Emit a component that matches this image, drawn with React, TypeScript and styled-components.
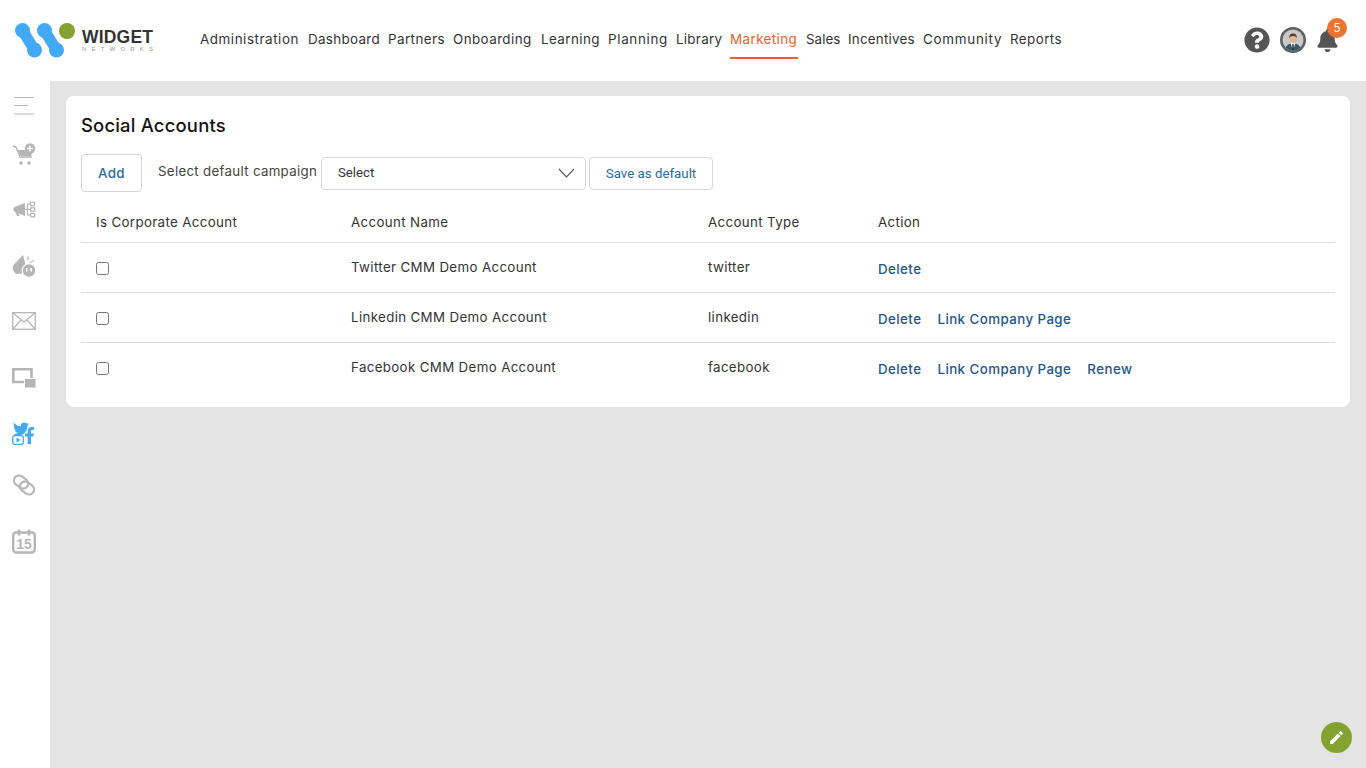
import React from "react";
import styled, { createGlobalStyle } from "styled-components";
import { FaBell, FaFacebookF, FaQuestionCircle, FaTwitter } from "react-icons/fa";
import { MdEdit } from "react-icons/md";

const GlobalStyle = createGlobalStyle`
  html, body { margin: 0; padding: 0; height: 100%; }
  body { font-family: Inter, "Open Sans", "Liberation Sans", sans-serif; color: #333; background: #fff; }
  * { box-sizing: border-box; }
`;

const Page = styled.div`
  height: 768px;
  display: flex;
  flex-direction: column;
  overflow: hidden;
  position: relative;
`;

const Header = styled.header`
  height: 81px;
  flex-shrink: 0;
  background: #fff;
  display: flex;
  align-items: flex-start;
  padding-left: 15px;
`;

const Logo = styled.div`
  width: 185px;
  height: 81px;
  display: flex;
  align-items: flex-start;
  padding-top: 21px;
`;

const LogoText = styled.div`
  margin: 7px 0 0 3px;
  display: flex;
  flex-direction: column;
`;

const LogoName = styled.span`
  font-family: "Liberation Sans", sans-serif;
  font-size: 17.5px;
  line-height: 18px;
  font-weight: 700;
  color: #333;
  letter-spacing: 0.2px;
`;

const LogoSub = styled.span`
  font-family: "Liberation Sans", sans-serif;
  font-size: 6px;
  line-height: 7px;
  color: #999;
  letter-spacing: 5.2px;
`;

const Nav = styled.nav`
  display: flex;
  gap: 8px;
  height: 59px;
`;

const NavItem = styled.a<{ $active?: boolean; $w: number; $ls: number }>`
  width: ${p => p.$w}px;
  white-space: nowrap;
  height: 100%;
  padding-top: 31px;
  font-size: 13.4px;
  line-height: 17px;
  letter-spacing: ${p => 0.42 + p.$ls}px;
  color: ${p => (p.$active ? "#e0622f" : "#333")};
  border-bottom: 2px solid ${p => (p.$active ? "#e0622f" : "transparent")};
`;

const HeaderTools = styled.div`
  margin-left: auto;
  display: flex;
  align-items: center;
  gap: 10px;
  height: 80px;
  padding-right: 27px;
`;

const ToolIcon = styled.span`
  position: relative;
  display: flex;
  color: #555;
`;

const Badge = styled.span`
  position: absolute;
  top: -11px;
  right: -8px;
  width: 20px;
  height: 20px;
  border-radius: 50%;
  background: #ea7434;
  color: #fff;
  font-size: 11.5px;
  line-height: 20px;
  text-align: center;
`;

const Body = styled.div`
  flex: 1;
  display: flex;
  min-height: 0;
`;

const Sidebar = styled.aside`
  width: 50px;
  flex-shrink: 0;
  background: #fff;
  display: flex;
  flex-direction: column;
  align-items: center;
`;

const SideSlot = styled.div<{ $h: number }>`
  height: ${p => p.$h}px;
  width: 100%;
  display: flex;
  align-items: center;
  justify-content: center;
  flex-shrink: 0;
  padding-right: 2px;
`;

const Main = styled.main`
  flex: 1;
  background: #e4e4e4;
  padding: 15px 16px;
`;

const Card = styled.section`
  background: #fff;
  border-radius: 8px;
  height: 311px;
  padding: 15px;
`;

const Title = styled.h1`
  margin: 0;
  font-size: 18.4px;
  line-height: 28px;
  font-weight: 500;
  color: #111;
  letter-spacing: 0.22px;
`;

const Toolbar = styled.div`
  margin-top: 15px;
  height: 38px;
  display: flex;
  align-items: flex-start;
`;

const AddButton = styled.button`
  width: 61px;
  height: 38px;
  background: #fff;
  border: 1px solid #d5d5d5;
  border-radius: 4px;
  font: inherit;
  font-size: 13.4px;
  font-weight: 450;
  letter-spacing: 0.3px;
  color: #2f6a9f;
  padding: 0;
`;

const FieldLabel = styled.label`
  margin-left: 16px;
  width: 163px;
  white-space: nowrap;
  font-size: 13.3px;
  line-height: 34px;
  letter-spacing: 0.3px;
  color: #444;
`;

const SelectBox = styled.div`
  margin-top: 3px;
  width: 265px;
  height: 33px;
  border: 1px solid #d8d8d8;
  border-radius: 4px;
  display: flex;
  align-items: center;
  justify-content: space-between;
  padding: 0 10px 2px 16px;
  font-family: Roboto, "Liberation Sans", sans-serif;
  font-size: 13.2px;
  color: #333;
`;

const SaveButton = styled.button`
  margin: 3px 0 0 3px;
  width: 124px;
  height: 33px;
  background: #fff;
  border: 1px solid #d8d8d8;
  border-radius: 4px;
  font-family: Roboto, "Liberation Sans", sans-serif;
  font-size: 13.3px;
  color: #2f6a9f;
  padding: 0;
`;

const TableRow = styled.div`
  display: grid;
  grid-template-columns: 255px 357px 170px 1fr;
  height: 50px;
  align-items: center;
  border-bottom: 1px solid #ddd;
  &:last-child {
    border-bottom-color: transparent;
  }
`;

const Cell = styled.div`
  padding: 0 15px 1px;
  font-size: 13.3px;
  letter-spacing: 0.36px;
  color: #333;
  white-space: nowrap;
`;

const HeadRow = styled.div`
  margin-top: 7px;
  display: grid;
  grid-template-columns: 255px 357px 170px 1fr;
  height: 44px;
  padding-top: 4px;
  align-items: center;
  border-bottom: 1px solid #ddd;
`;

const Actions = styled.div`
  padding: 3px 15px 0;
  display: flex;
  gap: 16px;
`;

const ActionLink = styled.a`
  font-size: 13.3px;
  font-weight: 450;
  letter-spacing: 0.44px;
  color: #22558c;
  white-space: nowrap;
`;

const Check = styled.input.attrs({ type: "checkbox" })`
  display: block;
  margin: 2px 0 0;
  width: 13px;
  height: 13px;
`;

const Fab = styled.button`
  position: absolute;
  right: 14px;
  bottom: 15px;
  width: 31px;
  height: 31px;
  border: 0;
  border-radius: 50%;
  background: #84a22f;
  color: #fff;
  display: flex;
  align-items: center;
  justify-content: center;
  padding: 0;
`;

const SocialWrap = styled.span`
  position: relative;
  display: block;
  width: 24px;
  height: 24px;
  color: #42a9f5;
`;

const SocialTwitter = styled.span`
  position: absolute;
  left: 1px;
  top: 0;
  display: flex;
`;

const SocialFacebook = styled.span`
  position: absolute;
  right: -2px;
  top: 6px;
  display: flex;
`;

const SocialPlay = styled.svg`
  position: absolute;
  left: 0;
  bottom: 0;
`;

const navItems: [string, number, number][] = [
  ["Administration", 100, 0.14], ["Dashboard", 72, -0.1], ["Partners", 57, 0], ["Onboarding", 80, 0], ["Learning", 59, 0],
  ["Planning", 60, 0.25], ["Library", 46, -0.14], ["Marketing", 68, 0], ["Sales", 34, -0.4], ["Incentives", 67, -0.2],
  ["Community", 79, 0.33], ["Reports", 52, 0],
];

const rows = [
  { name: "Twitter CMM Demo Account", type: "twitter", actions: ["Delete"] },
  { name: "Linkedin CMM Demo Account", type: "linkedin", actions: ["Delete", "Link Company Page"] },
  { name: "Facebook CMM Demo Account", type: "facebook", actions: ["Delete", "Link Company Page", "Renew"] },
];

const GREY = "#b5b5b5";
const BLUE = "#42a9f5";

const LogoMark = () => (
  <svg width="64" height="38" viewBox="0 0 64 38">
    <g fill={BLUE} stroke="none">
      <circle cx="7.5" cy="9.5" r="7.5" />
      <circle cx="19.5" cy="29" r="7.5" />
      <circle cx="29.5" cy="9.5" r="7.5" />
      <circle cx="41.5" cy="29" r="7.5" />
    </g>
    <g stroke={BLUE} strokeWidth="11">
      <path d="M7.5 9.5 L19.5 29" />
      <path d="M29.5 9.5 L41.5 29" />
    </g>
    <circle cx="52" cy="10" r="8" fill="#84a22f" />
  </svg>
);

const MenuIcon = () => (
  <svg width="22" height="20" viewBox="0 0 22 20" stroke={GREY} strokeWidth="1">
    <path d="M1 1.5h20M1 9.5h14M1 18h20" />
  </svg>
);

const CartIcon = () => (
  <svg width="24" height="24" viewBox="0 0 24 24">
    <path d="M1 3 L4 4 L8 14 H20" fill="none" stroke={GREY} strokeWidth="1.4" />
    <path d="M5.5 7 H15 L17 10 L20 9.5 L19 13 H8.5 Z" fill={GREY} />
    <circle cx="9" cy="20" r="1.8" fill={GREY} />
    <circle cx="17" cy="20" r="1.8" fill={GREY} />
    <circle cx="18" cy="5.5" r="5.2" fill={GREY} />
    <path d="M18 2.5v6M15 5.5h6" stroke="#fff" strokeWidth="1.5" />
  </svg>
);

const MegaphoneIcon = () => (
  <svg width="24" height="18" viewBox="0 0 24 18">
    <path d="M2.5 6 L13 2 V15 L3 11 Q0 8.5 2.5 6 Z" fill={GREY} />
    <path d="M3.5 11 L5 15 H7.5 L6.5 12" fill={GREY} />
    <g fill="none" stroke={GREY} strokeWidth="1.2">
      <path d="M13 8.5 H18 M15.5 8.5 V3 H18 M15.5 8.5 V14 H18" />
      <rect x="18.6" y="1.2" width="4" height="3.4" />
      <rect x="18.6" y="6.8" width="4" height="3.4" />
      <rect x="18.6" y="12.4" width="4" height="3.4" />
    </g>
  </svg>
);

const CampaignIcon = () => (
  <svg width="24" height="25" viewBox="0 0 24 25">
    <path d="M2 10.5 L11 1 L15.5 19 L4 20 Q-1.5 15 2 10.5 Z" fill={GREY} />
    <circle cx="17" cy="16.5" r="6.8" fill={GREY} stroke="#fff" strokeWidth="1.2" />
    <path d="M14.8 14v3.6M19.2 14v3.6" stroke="#fff" strokeWidth="1.6" />
    <path d="M15.5 6 L16.5 2.5M18.5 8.5 L22 6.5" stroke={GREY} strokeWidth="1.3" />
  </svg>
);

const MailIcon = () => (
  <svg width="24" height="18" viewBox="0 0 24 18" fill="none" stroke={GREY} strokeWidth="1.3">
    <rect x="0.7" y="0.7" width="22.6" height="16.6" />
    <path d="M1 1 L12 10 L23 1M1 17 L9 8M23 17 L15 8" />
  </svg>
);

const ScreenIcon = () => (
  <svg width="24" height="20" viewBox="0 0 24 20">
    <path d="M12 14H1.3V1.3H19.5V10" fill="none" stroke={GREY} strokeWidth="2.6" />
    <rect x="13" y="11" width="10.5" height="8.5" fill={GREY} />
  </svg>
);

const SocialIcon = () => (
  <SocialWrap>
    <SocialTwitter><FaTwitter size={16} /></SocialTwitter>
    <SocialFacebook><FaFacebookF size={17} /></SocialFacebook>
    <SocialPlay width="12" height="10" viewBox="0 0 12 10">
      <rect x="0.7" y="0.7" width="10.6" height="8.6" rx="2" fill="none" stroke={BLUE} strokeWidth="1.3" />
      <path d="M4.5 2.5 L8.5 5 L4.5 7.5 Z" fill={BLUE} />
    </SocialPlay>
  </SocialWrap>
);

const LinkIcon = () => (
  <svg width="24" height="22" viewBox="0 0 24 22" fill="none" stroke={GREY} strokeWidth="2.2">
    <rect x="1.5" y="3" width="15" height="10" rx="5" transform="rotate(35 9 8)" />
    <rect x="7.5" y="9" width="15" height="10" rx="5" transform="rotate(35 15 14)" />
  </svg>
);

const CalendarIcon = () => (
  <svg width="24" height="25" viewBox="0 0 24 25">
    <rect x="1.2" y="3.5" width="21.6" height="20" rx="3" fill="none" stroke={GREY} strokeWidth="2.4" />
    <path d="M7 0.5v6M17 0.5v6" stroke={GREY} strokeWidth="2.6" />
    <text x="12" y="20" textAnchor="middle" fontSize="14" fontWeight="700" fontFamily="Liberation Sans, sans-serif" fill={GREY}>15</text>
  </svg>
);

const AvatarIcon = () => (
  <svg width="26" height="26" viewBox="0 0 26 26">
    <defs>
      <clipPath id="face"><circle cx="13" cy="13" r="10.5" /></clipPath>
    </defs>
    <circle cx="13" cy="13" r="13" fill="#5f5f5f" />
    <circle cx="13" cy="13" r="10.5" fill="#c9c9c9" />
    <g clipPath="url(#face)">
      <path d="M4 26 Q5 16.5 13 16 Q21 16.5 22 26 Z" fill="#2e5a6b" />
      <path d="M10.5 16 L13 24 L15.5 16 Z" fill="#f2f2f2" />
      <path d="M12.4 17 h1.2 l0.4 6 l-1 1.5 l-1 -1.5 Z" fill="#333" />
      <ellipse cx="13" cy="11.5" rx="3.6" ry="4.4" fill="#e0b48e" />
      <path d="M9.2 11 Q9 6.5 13 6.5 Q17 6.5 16.8 11 Q15.5 8.5 13 9 Q10.5 8.5 9.2 11 Z" fill="#5a3a22" />
    </g>
  </svg>
);

const Chevron = () => (
  <svg width="17" height="10" viewBox="0 0 17 10" fill="none" stroke="#555" strokeWidth="1.1">
    <path d="M1 1 L8.5 9 L16 1" />
  </svg>
);

const sideIcons: [React.ReactNode, number][] = [
  [<MenuIcon key="m" />, 50],
  [<CartIcon key="c" />, 48],
  [<MegaphoneIcon key="g" />, 62],
  [<CampaignIcon key="a" />, 50],
  [<MailIcon key="e" />, 60],
  [<ScreenIcon key="s" />, 53],
  [<SocialIcon key="o" />, 58],
  [<LinkIcon key="l" />, 46],
  [<CalendarIcon key="k" />, 66],
];

export default function App() {
  return (
    <Page>
      <GlobalStyle />
      <Header>
        <Logo>
          <LogoMark />
          <LogoText>
            <LogoName>WIDGET</LogoName>
            <LogoSub>NETWORKS</LogoSub>
          </LogoText>
        </Logo>
        <Nav>
          {navItems.map(([label, w, ls]) => (
            <NavItem key={label} $w={w} $ls={ls} $active={label === "Marketing"}>{label}</NavItem>
          ))}
        </Nav>
        <HeaderTools>
          <ToolIcon><FaQuestionCircle size={26} /></ToolIcon>
          <ToolIcon><AvatarIcon /></ToolIcon>
          <ToolIcon>
            <FaBell size={23} />
            <Badge>5</Badge>
          </ToolIcon>
        </HeaderTools>
      </Header>
      <Body>
        <Sidebar>
          {sideIcons.map(([icon, h], i) => (
            <SideSlot key={i} $h={h}>{icon}</SideSlot>
          ))}
        </Sidebar>
        <Main>
          <Card>
            <Title>Social Accounts</Title>
            <Toolbar>
              <AddButton>Add</AddButton>
              <FieldLabel>Select default campaign</FieldLabel>
              <SelectBox>Select<Chevron /></SelectBox>
              <SaveButton>Save as default</SaveButton>
            </Toolbar>
            <HeadRow>
              <Cell>Is Corporate Account</Cell>
              <Cell>Account Name</Cell>
              <Cell>Account Type</Cell>
              <Cell>Action</Cell>
            </HeadRow>
            {rows.map(r => (
              <TableRow key={r.type}>
                <Cell><Check /></Cell>
                <Cell>{r.name}</Cell>
                <Cell>{r.type}</Cell>
                <Actions>
                  {r.actions.map(a => <ActionLink key={a}>{a}</ActionLink>)}
                </Actions>
              </TableRow>
            ))}
          </Card>
        </Main>
      </Body>
      <Fab><MdEdit size={17} /></Fab>
    </Page>
  );
}
